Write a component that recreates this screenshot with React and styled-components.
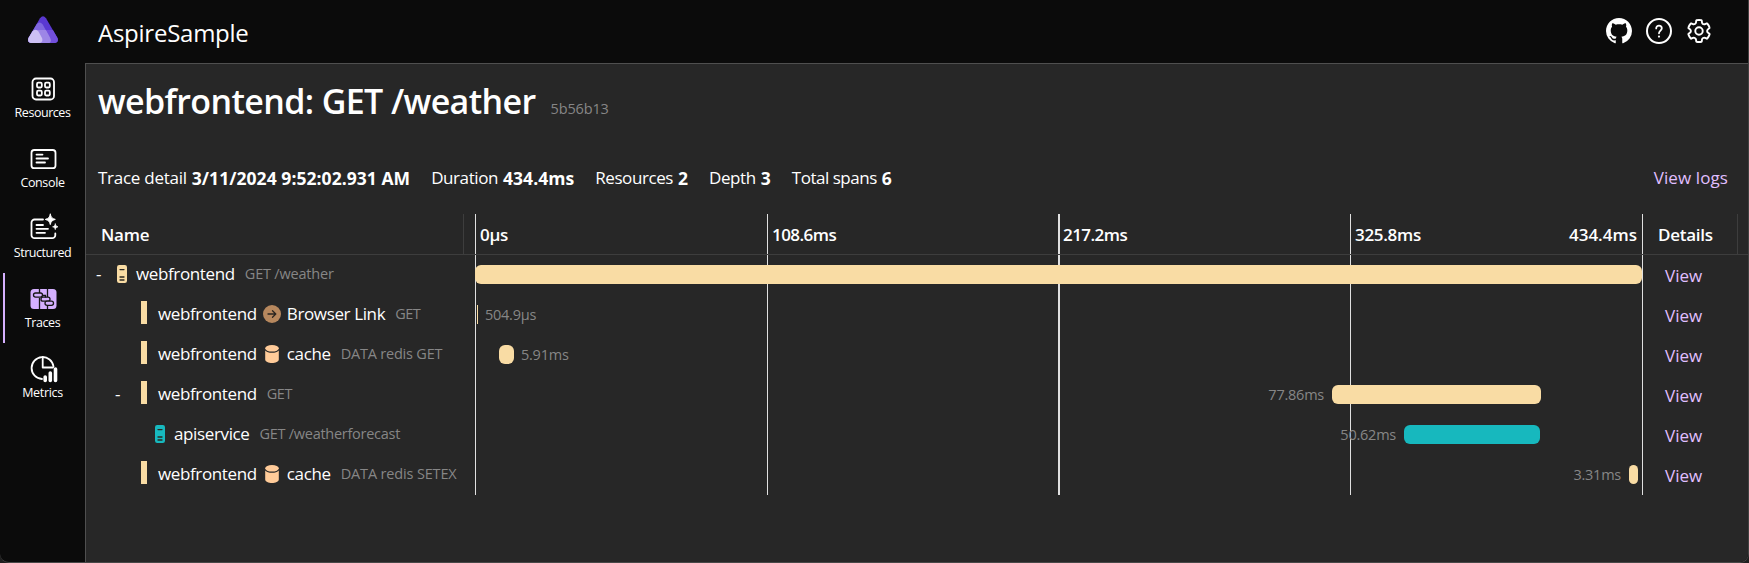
import React from "react";
import styled, { createGlobalStyle } from "styled-components";

const color = {
  chrome: "#0b0b0b",
  panel: "#272727",
  edge: "#4f4f4f",
  divider: "#3d3d3d",
  tick: "#e0e0e0",
  text: "#ffffff",
  muted: "#868686",
  accent: "#d5b0ff",
  link: "#e0bfff",
  sand: "#f9dca4",
  teal: "#17b8be",
  peach: "#ffcb99",
  bronze: "#b7885e",
};

const GlobalStyle = createGlobalStyle`
  * { box-sizing: border-box; }
  body {
    margin: 0;
    background: #1f1f1f;
    color: ${color.text};
    font: 400 17px/24px "Segoe UI", "Open Sans", "Noto Sans", sans-serif;
    white-space: nowrap;
    overflow: hidden;
  }
`;

const Shell = styled.div`
  display: grid;
  grid-template-columns: 85px 1fr;
  grid-template-rows: 63px 1fr;
  width: 1749px;
  height: 563px;
  background: ${color.chrome};
  border-right: 1px solid #424242;
  border-bottom: 1px solid #484848;
  border-bottom-left-radius: 9px;
  border-bottom-right-radius: 9px;
  overflow: hidden;
`;

const LogoCell = styled.div`
  display: flex;
  justify-content: center;
  align-items: flex-start;
  padding: 16px 0 0 1px;
`;

const TopBar = styled.header`
  display: flex;
  align-items: center;
  justify-content: space-between;
  padding: 2px 36px 0 13px;
`;

const AppName = styled.div`
  font-size: 24px;
  line-height: 32px;
  letter-spacing: -0.25px;
  padding-top: 1px;
`;

const TopActions = styled.div`
  display: flex;
  align-items: center;
  gap: 14px;
  padding-bottom: 4px;
  svg { display: block; }
`;

const Sidebar = styled.nav`
  display: flex;
  flex-direction: column;
`;

const NavItem = styled.a`
  height: 70px;
  display: flex;
  flex-direction: column;
  align-items: center;
  padding-top: 10px;
  background: ${(p) =>
    p.$active ? `linear-gradient(${color.accent}, ${color.accent}) 3px 0 / 2px 70px no-repeat` : "none"};
  svg { display: block; }
`;

const NavLabel = styled.span`
  font-size: 12.5px;
  line-height: 16px;
  letter-spacing: ${(p) => p.$track}px;
`;

const Panel = styled.main`
  background: ${color.panel};
  border-top: 1px solid ${color.edge};
  border-left: 1px solid ${color.edge};
  display: flex;
  flex-direction: column;
`;

const TitleRow = styled.div`
  display: flex;
  align-items: baseline;
  gap: 15px;
  padding: 14px 0 0 12px;
`;

const Title = styled.h1`
  margin: 0;
  font-size: 34px;
  font-weight: 600;
  letter-spacing: -0.62px;
  line-height: 46px;
`;

const TraceId = styled.span`
  font-size: 14.5px;
  letter-spacing: -0.15px;
  color: ${color.muted};
`;

const Summary = styled.div`
  display: flex;
  align-items: center;
  gap: 21px;
  height: 28px;
  margin-top: 40px;
  padding: 0 20px 0 12px;
`;

const Fact = styled.div`
  display: flex;
  gap: 5px;
`;

const FactLabel = styled.span`
  letter-spacing: ${(p) => p.$track}px;
`;

const FactValue = styled.strong`
  font-size: 17.5px;
  font-weight: 700;
  letter-spacing: 0.05px;
`;

const LogsLink = styled.a`
  margin-left: auto;
  color: ${color.link};
  letter-spacing: 0.1px;
`;

const TraceTable = styled.section`
  margin-top: 22px;
`;

const TableRow = styled.div`
  display: grid;
  grid-template-columns: 389px 1168px 1fr;
  height: 40px;
`;

const HeaderRow = styled(TableRow)`
  height: 41px;
  border-bottom: 1px solid ${color.divider};
  font-weight: 600;
`;

const HeaderCell = styled.div`
  display: flex;
  align-items: center;
  width: ${(p) => p.$width}px;
  padding: 1px 0 0 15px;
  letter-spacing: -0.25px;
  border-right: 1px solid ${color.divider};
`;

const TimelineCell = styled.div`
  position: relative;
  display: grid;
  grid-template-columns: 292px 291px 292px 293px;
`;

const Tick = styled.div`
  display: flex;
  align-items: center;
  justify-content: space-between;
  padding: 1px 5px 0 ${(p) => (p.$wide ? 3 : 4)}px;
  letter-spacing: ${(p) => p.$track || 0}px;
  border-left: ${(p) => (p.$wide ? 2 : 1)}px solid ${color.tick};
  &:nth-child(4) { border-right: 1px solid ${color.tick}; }
`;

const TickEnd = styled.span`
  letter-spacing: 0;
`;

const NameCell = styled.div`
  display: flex;
  align-items: center;
  padding-bottom: 3px;
`;

const Toggle = styled.span`
  width: ${(p) => p.$indent}px;
  padding-left: ${(p) => p.$offset}px;
`;

const SpanMarker = styled.span`
  width: 6px;
  height: 23px;
  margin: -2px 11px 0 0;
  background: ${(p) => p.$color};
`;

const ServiceIcon = styled.svg`
  display: block;
  margin: 1px 9px 0 0;
`;

const SpanText = styled.span`
  letter-spacing: -0.37px;
`;

const SpanDetail = styled.span`
  margin-left: 10px;
  padding-top: 1px;
  font-size: 14.5px;
  letter-spacing: ${(p) => p.$track}px;
  color: ${color.muted};
`;

const TargetIcon = styled.svg`
  display: block;
  margin: 1px 6px 0;
`;

const SpanBar = styled.div`
  position: absolute;
  top: 10px;
  height: 19px;
  border-radius: ${(p) => (p.$thin ? 0 : 6)}px;
  background: ${(p) => p.$color};
`;

const SpanDuration = styled.span`
  position: absolute;
  top: -1px;
  ${(p) => (p.$before ? "right: calc(100% + 8px);" : "left: calc(100% + 7px);")}
  line-height: 21px;
  font-size: 14.5px;
  letter-spacing: -0.24px;
  color: ${color.muted};
`;

const ViewLink = styled.a`
  display: flex;
  align-items: center;
  padding: 1px 0 0 22px;
  color: ${color.link};
`;

const stroke = { fill: "none", stroke: "#fff", strokeWidth: 1.8, strokeLinecap: "round", strokeLinejoin: "round" };

const AspireLogo = () => (
  <svg width="30" height="27" viewBox="0 0 30 27">
    <path d="M12 2.2Q15-1.6 18 2.2L29.5 22Q31 26.500 26.500 27H3.500Q-1 26.500.5 22Z" fill="#5a38d1" />
    <path d="M8.500 8.500Q11.500 4.500 14.700 8.500L25 27H3.500Q-1 26.500.5 22Z" fill="#8067df" />
    <path d="M6 14H18.300L25 24.500Q25.500 27 22 27H3.500Q-1 26.500.5 22Z" fill="#9d86e6" />
    <path d="M22.200 14H24.900L29.500 22Q31 26.500 26.500 27H21.500Q24 25.500 22 21.500L18 14Z" fill="#7350dc" />
    <path d="M4.300 15.500Q7.500 12 10.500 15.500L14 22Q15.500 26.500 11 27H3.500Q-1 26.500.5 22Z" fill="#cdc0f3" />
  </svg>
);

const GitHubIcon = () => (
  <svg width="26" height="26" viewBox="0 0 16 16" fill="#fff">
    <path d="M8 0c4.420 0 8 3.580 8 8a8.013 8.013 0 0 1-5.450 7.590c-.4.080-.55-.17-.55-.38 0-.27.010-1.130.010-2.200 0-.75-.25-1.230-.54-1.480 1.780-.2 3.650-.88 3.650-3.950 0-.88-.31-1.590-.82-2.150.080-.2.360-1.020-.080-2.120 0 0-.67-.22-2.200.82-.64-.18-1.320-.27-2-.27-.68 0-1.360.090-2 .27-1.530-1.030-2.200-.82-2.200-.82-.44 1.100-.16 1.920-.080 2.120-.51.560-.82 1.280-.82 2.150 0 3.060 1.860 3.750 3.640 3.950-.23.2-.44.550-.51 1.070-.46.210-1.610.550-2.330-.66-.15-.24-.6-.83-1.230-.82-.67.010-.27.380.010.530.340.190.730.9.820 1.130.160.450.680 1.310 2.690.940 0 .67.010 1.300.010 1.490 0 .21-.15.450-.55.380A7.995 7.995 0 0 1 0 8c0-4.420 3.580-8 8-8Z" />
  </svg>
);

const HelpIcon = () => (
  <svg width="26" height="26" viewBox="0 0 26 26" {...stroke}>
    <circle cx="13" cy="13" r="12" strokeWidth="2" />
    <path d="M10.200 10.400C10.200 8.700 11.400 7.600 13 7.600s2.800 1.100 2.800 2.700c0 2.200-2.800 2.600-2.800 5" />
    <circle cx="13" cy="18.600" r=".5" strokeWidth="1.200" />
  </svg>
);

const GearIcon = () => (
  <svg width="26" height="26" viewBox="1.200 1.200 21.600 21.600" {...stroke} strokeWidth="1.600">
    <path d="M12.012 2.750C12.746 2.758 13.400 2.820 14 2.960C14.200 3.010 14.260 3.150 14.280 3.300L14.450 4.730C14.560 5.690 15.370 6.410 16.320 6.410C16.580 6.410 16.840 6.360 17.070 6.250L18.400 5.680C18.560 5.620 18.690 5.650 18.800 5.770C19.700 6.780 20.380 7.900 20.780 9.150C20.840 9.320 20.800 9.470 20.660 9.580L19.520 10.480C19.040 10.840 18.750 11.400 18.750 12C18.750 12.600 19.040 13.160 19.520 13.510L20.670 14.360C20.810 14.470 20.860 14.620 20.800 14.780C20.400 16.050 19.720 17.210 18.810 18.240C18.700 18.360 18.560 18.390 18.420 18.330L17.070 17.740C16.520 17.500 15.900 17.540 15.380 17.840C14.860 18.140 14.510 18.660 14.450 19.260L14.290 20.660C14.270 20.830 14.180 20.930 14.020 20.970C12.700 21.270 11.300 21.270 9.980 20.970C9.820 20.930 9.730 20.830 9.710 20.660L9.550 19.260C9.490 18.670 9.140 18.140 8.620 17.850C8.110 17.550 7.480 17.510 6.930 17.750L5.580 18.340C5.440 18.390 5.300 18.360 5.190 18.240C4.280 17.210 3.600 16.050 3.200 14.780C3.140 14.620 3.190 14.470 3.330 14.360L4.480 13.510C4.960 13.160 5.250 12.600 5.250 12C5.250 11.400 4.960 10.840 4.480 10.480L3.330 9.640C3.190 9.530 3.140 9.380 3.200 9.220C3.600 7.950 4.290 6.790 5.200 5.770C5.310 5.650 5.440 5.620 5.590 5.680L6.930 6.250C7.480 6.490 8.110 6.460 8.630 6.150C9.150 5.850 9.490 5.330 9.550 4.730L9.720 3.300C9.740 3.150 9.820 3.010 9.980 2.970C10.600 2.830 11.300 2.758 12.012 2.750Z" />
    <circle cx="12" cy="12" r="3.100" />
  </svg>
);

const ResourcesIcon = () => (
  <svg width="32" height="32" viewBox="0 0 32 32" {...stroke}>
    <rect x="5.500" y="5.500" width="21.500" height="21" rx="3.500" />
    <rect x="10" y="9.700" width="4.800" height="4.800" rx="1.200" />
    <rect x="18" y="9.700" width="4.800" height="4.800" rx="1.200" />
    <rect x="10" y="17.700" width="4.800" height="4.800" rx="1.200" />
    <rect x="18" y="17.700" width="4.800" height="4.800" rx="1.200" />
  </svg>
);

const ConsoleIcon = () => (
  <svg width="32" height="32" viewBox="0 0 32 32" {...stroke}>
    <rect x="4.500" y="7" width="24" height="18.200" rx="2.800" />
    <path d="M9.500 11.600h6M9.500 15.500h11.500M9.500 19.500h8.500" />
  </svg>
);

const StructuredIcon = () => (
  <svg width="32" height="32" viewBox="0 0 32 32" {...stroke}>
    <path d="M16 6.500H7.700A3 3 0 0 0 4.500 9.500V22.200A3 3 0 0 0 7.700 25.200H25A3 3 0 0 0 28.300 22.200V20.500" />
    <path d="M9.500 12h6.500M9.500 15.800h11.500M9.500 19.800h8.500" />
    <path d="M23.300 1.200c.7 3.200 1.600 4.200 5 5.200-3.400 1-4.300 2-5 5.200-.7-3.200-1.600-4.200-5-5.200 3.400-1 4.300-2 5-5.200Z" fill="#fff" strokeWidth="1" />
    <path d="M28.300 11c.4 1.700.9 2.300 2.700 2.800-1.800.5-2.300 1.100-2.700 2.800-.4-1.700-.9-2.300-2.700-2.800 1.800-.5 2.300-1.100 2.700-2.800Z" fill="#fff" strokeWidth=".7" />
  </svg>
);

const TracesIcon = () => (
  <svg width="32" height="32" viewBox="0 0 32 32" fill="none" stroke="#161616" strokeWidth="1.300">
    <rect x="3.500" y="6" width="26" height="20" rx="3.500" fill={color.accent} stroke="none" />
    <path d="M12.500 6v4M12.500 15v11M20.500 6v8M20.500 22.500v3.500" />
    <rect x="6.500" y="10" width="9" height="4.200" rx="2.100" fill={color.accent} />
    <rect x="14" y="14.200" width="9" height="4" rx="2" fill={color.accent} />
    <rect x="18" y="18.200" width="8.500" height="4.200" rx="2.100" fill={color.accent} />
    <path d="M15.500 12.500h3v2" />
  </svg>
);

const MetricsIcon = () => (
  <svg width="32" height="32" viewBox="0 0 32 32" {...stroke}>
    <path d="M15 26A11 11 0 1 1 26.500 13.500" />
    <path d="M15.700 4.200V14.500H26" />
    <path d="M18.200 27.500v-3.500M23.300 27.500v-7.500M28.500 27.500v-11.500" strokeWidth="3.600" />
  </svg>
);

const ServerGlyph = ({ fill }) => (
  <ServiceIcon width="10" height="18" viewBox="0 0 10 18">
    <rect width="10" height="18" rx="2.200" fill={fill} />
    <path d="M3 4.600h4M3 12h4M3 15h4" stroke="#2b2822" strokeWidth="1.300" strokeLinecap="round" />
  </ServiceIcon>
);

const ArrowGlyph = () => (
  <TargetIcon width="18" height="18" viewBox="0 0 18 18">
    <circle cx="9" cy="9" r="9" fill={color.bronze} />
    <path d="M5 9h7.500M9.500 5.800L12.800 9l-3.300 3.200" fill="none" stroke="#2b2520" strokeWidth="1.300" strokeLinecap="round" strokeLinejoin="round" />
  </TargetIcon>
);

const DatabaseGlyph = () => (
  <TargetIcon width="18" height="18" viewBox="0 0 18 18">
    <path d="M2.200 5.400C3.500 7 6 7.700 9 7.700s5.500-.7 6.800-2.300V14.500C15.800 16.800 12.500 18 9 18s-6.800-1.200-6.800-3.500Z" fill={color.peach} />
    <ellipse cx="9" cy="3.300" rx="6.800" ry="3.300" fill={color.peach} />
  </TargetIcon>
);

const navItems = [
  { label: "Resources", Icon: ResourcesIcon, track: -0.46 },
  { label: "Console", Icon: ConsoleIcon, track: -0.36 },
  { label: "Structured", Icon: StructuredIcon, track: -0.45 },
  { label: "Traces", Icon: TracesIcon, track: -0.4, active: true },
  { label: "Metrics", Icon: MetricsIcon, track: -0.34 },
];

const facts = [
  { label: "Trace detail", value: "3/11/2024 9:52:02.931 AM", track: -0.26 },
  { label: "Duration", value: "434.4ms", track: -0.42 },
  { label: "Resources", value: "2", track: -0.42 },
  { label: "Depth", value: "3", track: -0.42 },
  { label: "Total spans", value: "6", track: -0.48 },
];

const WIDTH = 1168;

const spans = [
  { indent: 31, toggle: 10, service: "webfrontend", detail: "GET /weather", track: -0.2, kind: "server", fill: color.sand, start: 0, width: 1167 },
  { indent: 55, service: "webfrontend", target: "Browser Link", Target: ArrowGlyph, detail: "GET", track: -0.5, fill: color.sand, start: 2, width: 1, thin: true, duration: "504.9µs" },
  { indent: 55, service: "webfrontend", target: "cache", Target: DatabaseGlyph, detail: "DATA redis GET", track: -0.2, fill: color.sand, start: 24, width: 15, duration: "5.91ms" },
  { indent: 55, toggle: 29, service: "webfrontend", detail: "GET", track: -0.5, fill: color.sand, start: 857, width: 209, duration: "77.86ms", before: true },
  { indent: 69, service: "apiservice", detail: "GET /weatherforecast", track: -0.27, kind: "server", fill: color.teal, start: 929, width: 136, duration: "50.62ms", before: true },
  { indent: 55, service: "webfrontend", target: "cache", Target: DatabaseGlyph, detail: "DATA redis SETEX", track: -0.15, fill: color.sand, start: 1154, width: 9, duration: "3.31ms", before: true },
];

const SpanRow = ({ span }) => {
  const { Target } = span;
  return (
    <TableRow>
      <NameCell>
        <Toggle $indent={span.indent} $offset={span.toggle || 0}>{span.toggle ? "-" : null}</Toggle>
        {span.kind === "server" ? <ServerGlyph fill={span.fill} /> : <SpanMarker $color={span.fill} />}
        <SpanText>{span.service}</SpanText>
        {Target && <Target />}
        {Target && <SpanText>{span.target}</SpanText>}
        <SpanDetail $track={span.track}>{span.detail}</SpanDetail>
      </NameCell>
      <TimelineCell>
        <Tick /><Tick /><Tick $wide /><Tick />
        <SpanBar
          $color={span.fill}
          $thin={span.thin}
          style={{ left: `${(span.start / WIDTH) * 100}%`, width: `${(span.width / WIDTH) * 100}%` }}
        >
          {span.duration && <SpanDuration $before={span.before}>{span.duration}</SpanDuration>}
        </SpanBar>
      </TimelineCell>
      <ViewLink>View</ViewLink>
    </TableRow>
  );
};

export default function App() {
  return (
    <>
      <GlobalStyle />
      <Shell>
        <LogoCell><AspireLogo /></LogoCell>
        <TopBar>
          <AppName>AspireSample</AppName>
          <TopActions><GitHubIcon /><HelpIcon /><GearIcon /></TopActions>
        </TopBar>
        <Sidebar>
          {navItems.map(({ label, Icon, track, active }) => (
            <NavItem key={label} $active={active}>
              <Icon />
              <NavLabel $track={track}>{label}</NavLabel>
            </NavItem>
          ))}
        </Sidebar>
        <Panel>
          <TitleRow>
            <Title>webfrontend: GET /weather</Title>
            <TraceId>5b56b13</TraceId>
          </TitleRow>
          <Summary>
            {facts.map((fact) => (
              <Fact key={fact.label}>
                <FactLabel $track={fact.track}>{fact.label}</FactLabel>
                <FactValue>{fact.value}</FactValue>
              </Fact>
            ))}
            <LogsLink>View logs</LogsLink>
          </Summary>
          <TraceTable>
            <HeaderRow>
              <HeaderCell $width={378}>Name</HeaderCell>
              <TimelineCell>
                <Tick $track={-0.25}>0µs</Tick>
                <Tick $track={-0.55}>108.6ms</Tick>
                <Tick $wide $track={-0.55}>217.2ms</Tick>
                <Tick $track={-0.3}><span>325.8ms</span><TickEnd>434.4ms</TickEnd></Tick>
              </TimelineCell>
              <HeaderCell $width={95}>Details</HeaderCell>
            </HeaderRow>
            {spans.map((span, i) => <SpanRow key={i} span={span} />)}
          </TraceTable>
        </Panel>
      </Shell>
    </>
  );
}
